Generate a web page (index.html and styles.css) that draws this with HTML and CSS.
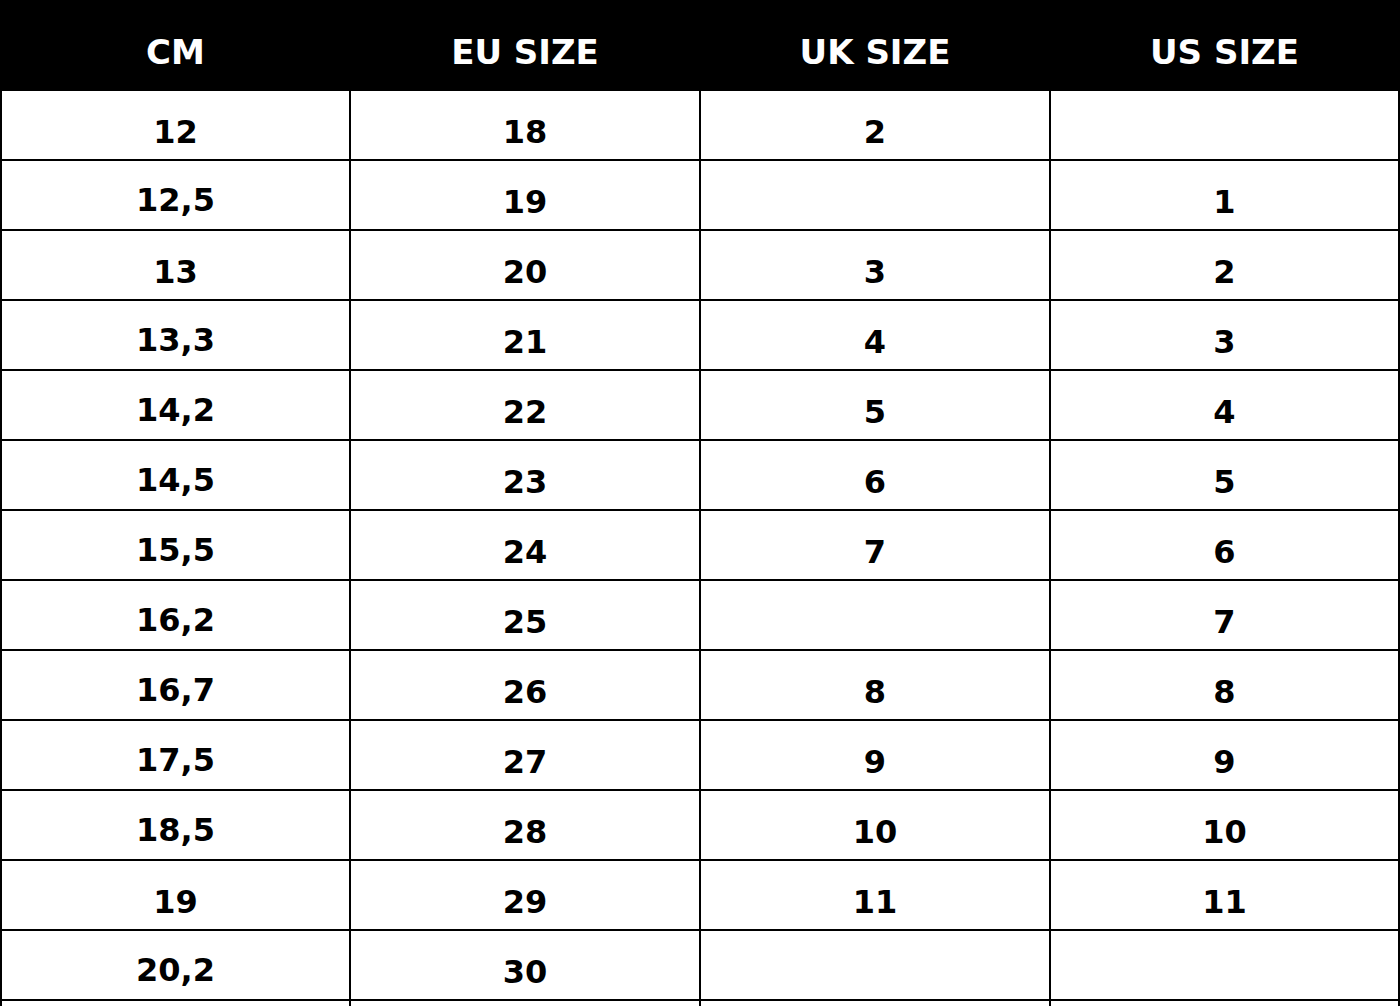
FILE: index.html
```html
<!DOCTYPE html>
<html lang="en">
<head>
<meta charset="utf-8">
<title>Size chart</title>
<link rel="stylesheet" href="styles.css">
</head>
<body>
<div class="chart">
  <div class="head">CM</div><div class="head">EU SIZE</div><div class="head">UK SIZE</div><div class="head">US SIZE</div>

  <div class="cell">12</div><div class="cell">18</div><div class="cell">2</div><div class="cell"></div>
  <div class="cell dec">12,5</div><div class="cell">19</div><div class="cell"></div><div class="cell">1</div>
  <div class="cell">13</div><div class="cell">20</div><div class="cell">3</div><div class="cell">2</div>
  <div class="cell dec">13,3</div><div class="cell">21</div><div class="cell">4</div><div class="cell">3</div>
  <div class="cell dec">14,2</div><div class="cell">22</div><div class="cell">5</div><div class="cell">4</div>
  <div class="cell dec">14,5</div><div class="cell">23</div><div class="cell">6</div><div class="cell">5</div>
  <div class="cell dec">15,5</div><div class="cell">24</div><div class="cell">7</div><div class="cell">6</div>
  <div class="cell dec">16,2</div><div class="cell">25</div><div class="cell"></div><div class="cell">7</div>
  <div class="cell dec">16,7</div><div class="cell">26</div><div class="cell">8</div><div class="cell">8</div>
  <div class="cell dec">17,5</div><div class="cell">27</div><div class="cell">9</div><div class="cell">9</div>
  <div class="cell dec">18,5</div><div class="cell">28</div><div class="cell">10</div><div class="cell">10</div>
  <div class="cell">19</div><div class="cell">29</div><div class="cell">11</div><div class="cell">11</div>
  <div class="cell dec">20,2</div><div class="cell">30</div><div class="cell"></div><div class="cell"></div>
  <div class="cell"></div><div class="cell"></div><div class="cell"></div><div class="cell"></div>
</div>
</body>
</html>
```

FILE: styles.css
```css
html, body {
  margin: 0;
  padding: 0;
  background: #ffffff;
}

body {
  font-family: "DejaVu Sans", "Liberation Sans", sans-serif;
  font-weight: bold;
  color: #000000;
  overflow: hidden;
}

.chart {
  width: 1400px;
  box-sizing: border-box;
  display: grid;
  grid-template-columns: 347px 348px 348px 347px;
  grid-template-rows: 89px;
  grid-auto-rows: 68px;
  gap: 2px;
  padding: 0 2px 2px 2px;
  background: #000000;
}

.head {
  background: #000000;
  color: #ffffff;
  font-size: 34px;
  line-height: 34px;
  text-align: center;
  padding-top: 35px;
}

.cell {
  background: #ffffff;
  font-size: 32px;
  line-height: 32px;
  text-align: center;
  padding-top: 25px;
}

.cell.dec {
  padding-top: 23px;
}
```
